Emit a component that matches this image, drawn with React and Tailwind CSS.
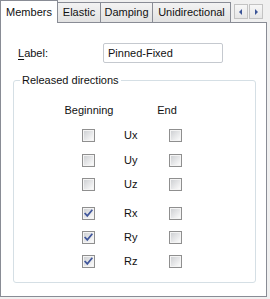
import React from "react";

const font = { fontFamily: '"Liberation Sans", Arial, sans-serif' };

function Checkbox({ checked }) {
  return (
    <div className="relative w-[13px] h-[13px] border border-[#8f8f8f] bg-[#f4f4f4] shrink-0">
      <div className="absolute left-[1px] top-[1px] w-[9px] h-[9px] bg-gradient-to-br from-[#cfd1d4] to-[#fbfbfb]" />
      {checked && (
        <svg className="absolute left-0 top-0" width="11" height="11" viewBox="0 0 11 11">
          <path d="M2.2 5.6 L4.3 7.9 L8.8 2.4" fill="none" stroke="#41579c" strokeWidth="1.7" strokeLinecap="square" strokeLinejoin="miter" />
        </svg>
      )}
    </div>
  );
}

function Row({ label, begin, mt }) {
  return (
    <div className={`flex items-center pl-[68px] h-[13px] ${mt}`}>
      <Checkbox checked={begin} />
      <span className="ml-[29px] w-[45px] text-[11px] leading-[13px] text-[#111]">{label}</span>
      <Checkbox checked={false} />
    </div>
  );
}

function Tab({ children, w }) {
  return (
    <div
      className={`${w} h-[20px] border border-b-0 border-l-0 border-[#898c95] bg-gradient-to-b from-[#f3f3f3] to-[#e2e2e2] flex items-center justify-center text-[11px] text-[#111]`}
    >
      {children}
    </div>
  );
}

export default function App() {
  return (
    <div className="w-[270px] h-[299px] bg-[#f0f0f0] flex flex-col" style={font}>
      <div className="flex items-end h-[22px]">
        <div className="relative z-10 w-[58px] h-[23px] -mb-px bg-white border border-b-0 border-[#898c95] flex items-start justify-center pt-[5px] text-[11px] leading-[13px] text-[#111]">
          Members
        </div>
        <Tab w="w-[43px]">Elastic</Tab>
        <Tab w="w-[52px]">Damping</Tab>
        <Tab w="w-[78px]">Unidirectional</Tab>
        <div className="self-start mt-[4px] ml-[3px] flex gap-[1px]">
          <div className="w-[14px] h-[15px] border border-[#c3c3c3] bg-gradient-to-b from-[#f7f7f7] to-[#e6e6e6] flex items-center justify-center">
            <svg width="4" height="6" viewBox="0 0 4 6"><path d="M3 0 L0 3 L3 6 Z" fill="#3c5597" /></svg>
          </div>
          <div className="w-[14px] h-[15px] border border-[#c3c3c3] bg-gradient-to-b from-[#f7f7f7] to-[#e6e6e6] flex items-center justify-center">
            <svg width="4" height="6" viewBox="0 0 4 6"><path d="M1 0 L4 3 L1 6 Z" fill="#3c5597" /></svg>
          </div>
        </div>
      </div>
      <div className="w-[267px] h-[275px] border border-[#898c95] bg-white flex flex-col pl-[12px] pt-[20px] text-[11px] text-[#111]">
        <div className="flex items-center h-[20px] pl-[5px]">
          <span className="w-[85px] leading-[13px]">
            <span className="underline underline-offset-2">L</span>abel:
          </span>
          <div className="w-[120px] h-[20px] border border-[#c5c9cf] rounded-[2px] flex items-center pl-[4px] leading-[13px]">
            Pinned-Fixed
          </div>
        </div>
        <div className="relative mt-[17px] w-[243px] h-[203px] border border-[#d5dfe5] rounded-[3px] flex flex-col">
          <span className="absolute left-[6px] top-[-8px] h-[14px] leading-[14px] px-[2px] bg-white">
            Released directions
          </span>
          <div className="flex mt-[22px] h-[14px] leading-[14px] pl-[45px]">
            <span className="w-[60px] text-center">Beginning</span>
            <span className="ml-[28px] w-[40px] text-center">End</span>
          </div>
          <Row label="Ux" begin={false} mt="mt-[12px]" />
          <Row label="Uy" begin={false} mt="mt-[12px]" />
          <Row label="Uz" begin={false} mt="mt-[11px]" />
          <Row label="Rx" begin={true} mt="mt-[16px]" />
          <Row label="Ry" begin={true} mt="mt-[11px]" />
          <Row label="Rz" begin={true} mt="mt-[11px]" />
        </div>
      </div>
    </div>
  );
}
